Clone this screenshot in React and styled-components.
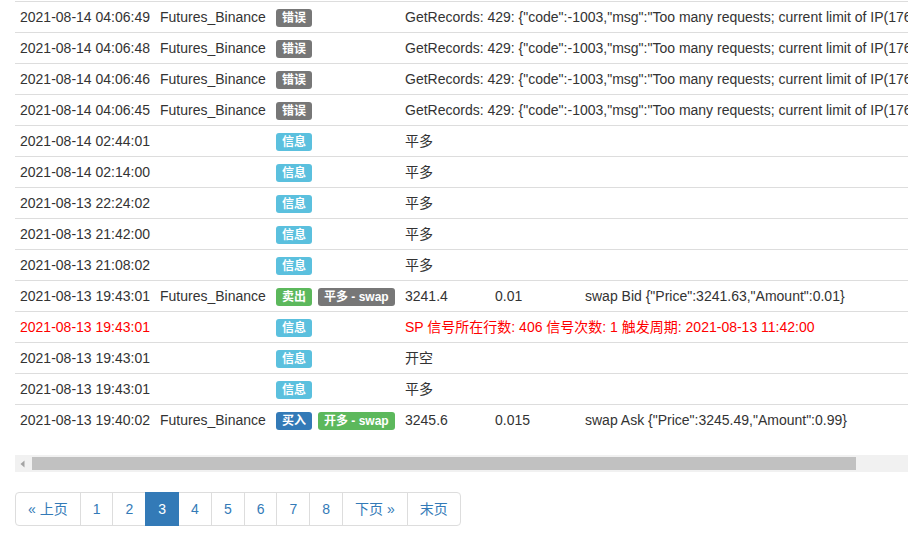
import React from 'react';
import styled, { createGlobalStyle } from 'styled-components';

const GlobalStyle = createGlobalStyle`
  html, body {
    margin: 0;
    overflow: hidden;
    background: #fff;
  }
  body {
    font-family: "Liberation Sans", "Noto Sans CJK SC", Arial, sans-serif;
    font-size: 14px;
    line-height: 20px;
    color: #333;
  }
`;

const logs = [
  { time: '2021-08-14 04:06:49', ex: 'Futures_Binance', tags: [['错误', 'default']], msg: 'GetRecords: 429: {"code":-1003,"msg":"Too many requests; current limit of IP(176.9.84.22) is 2400 requests per minute."}' },
  { time: '2021-08-14 04:06:48', ex: 'Futures_Binance', tags: [['错误', 'default']], msg: 'GetRecords: 429: {"code":-1003,"msg":"Too many requests; current limit of IP(176.9.84.22) is 2400 requests per minute."}' },
  { time: '2021-08-14 04:06:46', ex: 'Futures_Binance', tags: [['错误', 'default']], msg: 'GetRecords: 429: {"code":-1003,"msg":"Too many requests; current limit of IP(176.9.84.22) is 2400 requests per minute."}' },
  { time: '2021-08-14 04:06:45', ex: 'Futures_Binance', tags: [['错误', 'default']], msg: 'GetRecords: 429: {"code":-1003,"msg":"Too many requests; current limit of IP(176.9.84.22) is 2400 requests per minute."}' },
  { time: '2021-08-14 02:44:01', ex: '', tags: [['信息', 'info']], msg: '平多' },
  { time: '2021-08-14 02:14:00', ex: '', tags: [['信息', 'info']], msg: '平多' },
  { time: '2021-08-13 22:24:02', ex: '', tags: [['信息', 'info']], msg: '平多' },
  { time: '2021-08-13 21:42:00', ex: '', tags: [['信息', 'info']], msg: '平多' },
  { time: '2021-08-13 21:08:02', ex: '', tags: [['信息', 'info']], msg: '平多' },
  { time: '2021-08-13 19:43:01', ex: 'Futures_Binance', tags: [['卖出', 'success'], ['平多 - swap', 'default']], price: '3241.4', amount: '0.01', msg: 'swap Bid {"Price":3241.63,"Amount":0.01}' },
  { time: '2021-08-13 19:43:01', ex: '', tags: [['信息', 'info']], msg: 'SP 信号所在行数: 406 信号次数: 1 触发周期: 2021-08-13 11:42:00', red: true },
  { time: '2021-08-13 19:43:01', ex: '', tags: [['信息', 'info']], msg: '开空' },
  { time: '2021-08-13 19:43:01', ex: '', tags: [['信息', 'info']], msg: '平多' },
  { time: '2021-08-13 19:40:02', ex: 'Futures_Binance', tags: [['买入', 'primary'], ['开多 - swap', 'success']], price: '3245.6', amount: '0.015', msg: 'swap Ask {"Price":3245.49,"Amount":0.99}' },
];

const pages = ['« 上页', '1', '2', '3', '4', '5', '6', '7', '8', '下页 »', '末页'];

const labelColors = {
  default: '#777',
  info: '#5bc0de',
  success: '#5cb85c',
  primary: '#337ab7',
};

// visible width / table width, drives the scrollbar thumb
const VIEW_W = 910;
const TABLE_W = 968;

export default function App() {
  const thumbPct = (VIEW_W / TABLE_W) * 100;
  return (
    <Page>
      <GlobalStyle />
      <TableScroll>
        <LogTable>
          <colgroup>
            <col style={{ width: 140 }} />
            <col style={{ width: 116 }} />
            <col style={{ width: 129 }} />
            <col style={{ width: 90 }} />
            <col style={{ width: 90 }} />
            <col />
          </colgroup>
          <tbody>
            {logs.map((row, i) => (
              <Row key={i} $red={row.red}>
                <Cell>{row.time}</Cell>
                <Cell>{row.ex}</Cell>
                <Cell>
                  <Tags>
                    {row.tags.map(([text, kind]) => (
                      <Label key={text} $kind={kind}>{text}</Label>
                    ))}
                  </Tags>
                </Cell>
                {row.price ? (
                  <>
                    <Cell>{row.price}</Cell>
                    <Cell>{row.amount}</Cell>
                    <Cell>{row.msg}</Cell>
                  </>
                ) : (
                  <Cell colSpan={3}>{row.msg}</Cell>
                )}
              </Row>
            ))}
          </tbody>
        </LogTable>
      </TableScroll>
      <ScrollBar>
        <ScrollButton>
          <svg width="5" height="8" viewBox="0 0 5 8">
            <path d="M4.5 0.5 L0.5 4 L4.5 7.5 Z" fill="#a3a3a3" />
          </svg>
        </ScrollButton>
        <ScrollTrack>
          <Thumb style={{ width: `${thumbPct}%` }} />
        </ScrollTrack>
        <ScrollButton />
      </ScrollBar>
      <Pagination>
        {pages.map((p) => (
          <PageItem key={p} $active={p === '3'}>{p}</PageItem>
        ))}
      </Pagination>
    </Page>
  );
}

const Page = styled.div`
  padding: 1px 0 0 15px;
`;

const TableScroll = styled.div`
  width: ${VIEW_W}px;
  overflow: hidden;
`;

const LogTable = styled.table`
  width: ${TABLE_W}px;
  table-layout: fixed;
  border-collapse: collapse;
  border-spacing: 0;
  margin-bottom: 20px;
`;

const Row = styled.tr`
  color: ${(p) => (p.$red ? '#ff0000' : '#333')};
`;

const Cell = styled.td`
  padding: 5px;
  border-top: 1px solid #ddd;
  line-height: 20px;
  white-space: nowrap;
  overflow: hidden;
  vertical-align: top;
`;

const Tags = styled.div`
  display: flex;
  gap: 6px;
  height: 20px;
  padding-top: 2px;
  box-sizing: border-box;
`;

const Label = styled.span`
  display: inline-block;
  height: 18px;
  padding: 3px 6px;
  box-sizing: border-box;
  font-size: 12px;
  line-height: 12px;
  font-weight: bold;
  color: #fff;
  border-radius: 3px;
  white-space: nowrap;
  background: ${(p) => labelColors[p.$kind]};
`;

const ScrollBar = styled.div`
  width: ${VIEW_W}px;
  height: 17px;
  display: flex;
  background: #f1f1f1;
`;

const ScrollButton = styled.div`
  flex: 0 0 17px;
  display: flex;
  align-items: center;
  justify-content: center;
  padding-right: 2px;
  box-sizing: border-box;
`;

const ScrollTrack = styled.div`
  flex: 1;
  display: flex;
  align-items: center;
`;

const Thumb = styled.div`
  height: 13px;
  background: #c1c1c1;
`;

const Pagination = styled.div`
  display: inline-flex;
  margin: 20px 0;
  border-radius: 4px;
`;

const PageItem = styled.a`
  display: block;
  padding: 6px 12px;
  line-height: 20px;
  border: 1px solid ${(p) => (p.$active ? '#337ab7' : '#ddd')};
  margin-left: -1px;
  color: ${(p) => (p.$active ? '#fff' : '#337ab7')};
  background: ${(p) => (p.$active ? '#337ab7' : '#fff')};
  position: relative;
  z-index: ${(p) => (p.$active ? 2 : 'auto')};
  cursor: pointer;

  &:first-child {
    margin-left: 0;
    border-radius: 4px 0 0 4px;
  }
  &:last-child {
    border-radius: 0 4px 4px 0;
  }
`;
